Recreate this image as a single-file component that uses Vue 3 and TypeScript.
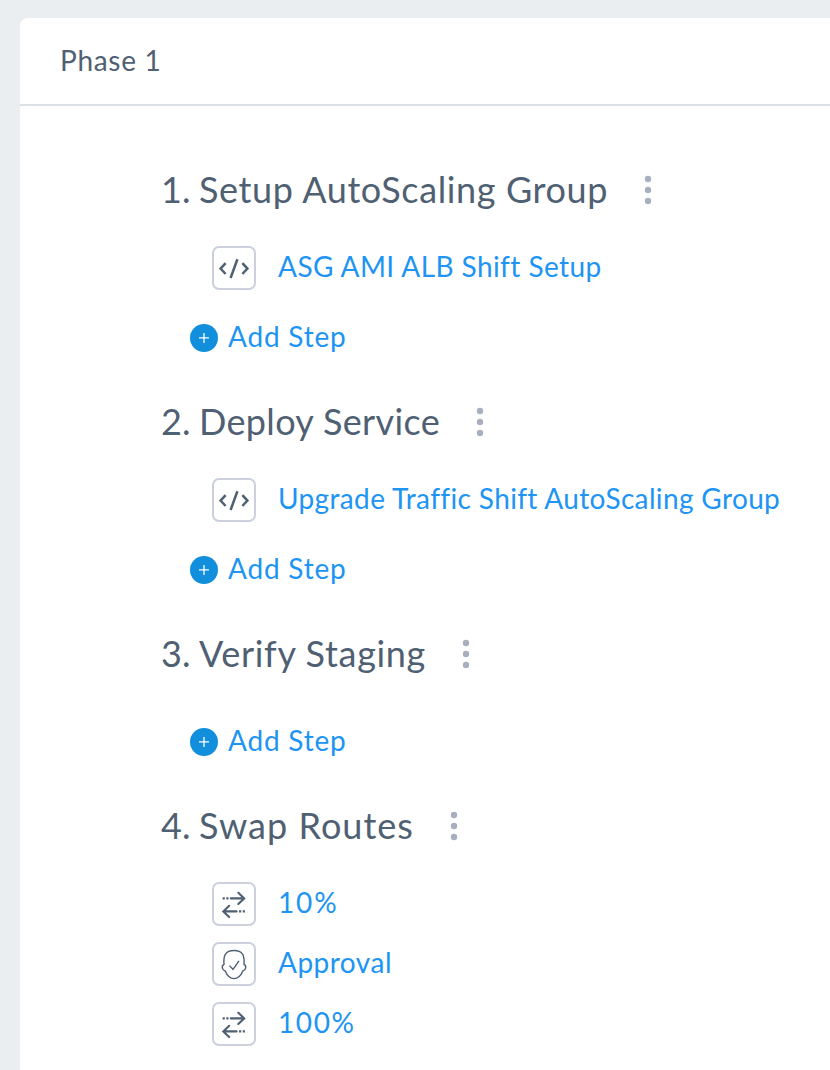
<script setup lang="ts">
type StepKind = 'code' | 'swap' | 'approval'

interface Step {
  label: string
  kind: StepKind
  width: number
}

interface Group {
  title: string
  width: number
  steps: Step[]
  canAdd: boolean
}

const groups: Group[] = [
  {
    title: 'Setup AutoScaling Group',
    width: 409,
    steps: [{ label: 'ASG AMI ALB Shift Setup', kind: 'code', width: 323 }],
    canAdd: true,
  },
  {
    title: 'Deploy Service',
    width: 241,
    steps: [{ label: 'Upgrade Traffic Shift AutoScaling Group', kind: 'code', width: 500 }],
    canAdd: true,
  },
  { title: 'Verify Staging', width: 227, steps: [], canAdd: true },
  {
    title: 'Swap Routes',
    width: 215,
    steps: [
      { label: '10%', kind: 'swap', width: 60.5 },
      { label: 'Approval', kind: 'approval', width: 114 },
      { label: '100%', kind: 'swap', width: 77.5 },
    ],
    canAdd: false,
  },
]

// Tracks a label out so that it fills the given width.
const vFit = {
  mounted(el: HTMLElement, binding: { value: number }) {
    const natural = el.getBoundingClientRect().width
    const count = (el.textContent ?? '').length
    el.style.letterSpacing = `${(binding.value - natural) / count}px`
  },
}
</script>

<template>
  <main class="page">
    <section class="card">
      <header class="card-head"><span v-fit="101.5" class="phase">Phase 1</span></header>
      <div class="card-body">
        <section v-for="(group, i) in groups" :key="group.title" class="group">
          <h2 class="group-head">
            <span class="num">{{ i + 1 }}.</span>
            <span v-fit="group.width" class="title">{{ group.title }}</span>
            <svg class="kebab" width="8" height="30" viewBox="0 0 8 30">
              <circle cx="4" cy="4" r="3.2" />
              <circle cx="4" cy="15" r="3.2" />
              <circle cx="4" cy="26" r="3.2" />
            </svg>
          </h2>
          <div class="steps">
            <div v-for="step in group.steps" :key="step.label" class="step">
              <span class="tile">
                <svg v-if="step.kind === 'code'" class="glyph code" viewBox="0 0 44 44">
                  <path d="M13.6 17.2 8.6 22.6 13.6 28M25.4 13.2 18.6 32M30.4 17.2 35.4 22.6 30.4 28" />
                </svg>
                <svg v-else-if="step.kind === 'swap'" class="glyph swap" viewBox="0 0 44 44">
                  <path d="M18.8 16.4H32M26.3 10.8 32.2 16.4 26.3 22M24.6 29.4H11.5M17.2 23.8 11.3 29.4 17.2 35" />
                  <path class="dots" d="M10.6 16.4h2.2M14.3 16.4h2.2M27 29.4h2.2M30.7 29.4h2.2" />
                </svg>
                <svg v-else class="glyph head" viewBox="0 0 44 44">
                  <path
                    d="M12 22.4C11.2 13.4 13.4 8.5 22 8.5S32.8 13.4 32 22.4C33.4 23.2 34 24.4 33.7 25.8C33.3 27.8 32.2 28.6 30.8 29C29 33.4 26 36.6 22 36.6S15 33.4 13.2 29C11.8 28.6 10.7 27.8 10.3 25.8C10 24.4 10.6 23.2 12 22.4Z"
                  />
                  <path d="M17.5 23.6 21 27.4 27 18.8" />
                </svg>
              </span>
              <a v-fit="step.width" class="link">{{ step.label }}</a>
            </div>
          </div>
          <div v-if="group.canAdd" class="add">
            <svg class="plus" width="28" height="28" viewBox="0 0 28 28">
              <circle cx="14" cy="14" r="14" />
              <path d="M9 13.9h10M14 8.9v10" />
            </svg>
            <a v-fit="118.5" class="link">Add Step</a>
          </div>
        </section>
      </div>
    </section>
  </main>
</template>

<style>
body {
  margin: 0;
  overflow: hidden;
}
</style>

<style scoped>
.page {
  box-sizing: border-box;
  height: 1070px;
  padding: 18px 0 0 20px;
  overflow: hidden;
  background: #eaeef1;
  font-family: Lato, 'Open Sans', sans-serif;
  color: #4f6072;
}
.card {
  min-height: 1052px;
  background: #fff;
  border-top-left-radius: 8px;
}
.card-head {
  box-sizing: border-box;
  display: flex;
  align-items: center;
  height: 88px;
  padding-left: 40px;
  border-bottom: 2px solid #dce1e6;
}
.phase {
  padding-bottom: 2px;
  font-size: 28px;
  line-height: 36px;
  white-space: nowrap;
}
.card-body {
  display: flex;
  flex-direction: column;
  gap: 24px;
  padding: 54px 0 0 141px;
}
.group {
  display: flex;
  flex-direction: column;
}
.group-head {
  display: flex;
  align-items: center;
  height: 60px;
  margin: 0 0 18px;
  font-size: 36px;
  font-weight: 400;
  line-height: 44px;
  white-space: nowrap;
}
.num {
  width: 38px;
  padding-bottom: 2px;
}
.title {
  padding-bottom: 2px;
}
.kebab {
  margin-left: 36px;
  fill: #a8b0c0;
}
.step {
  display: flex;
  align-items: center;
  gap: 22px;
  height: 60px;
  padding-left: 51px;
}
.tile {
  box-sizing: border-box;
  display: flex;
  width: 44px;
  height: 44px;
  border: 2px solid #cbd0dc;
  border-radius: 7px;
}
.glyph {
  flex: none;
  width: 44px;
  height: 44px;
  margin: -2px;
  fill: none;
  stroke: #4f6072;
}
.code {
  stroke-width: 2.5;
}
.swap {
  stroke-width: 2.1;
  stroke-linecap: round;
}
.dots {
  stroke-linecap: butt;
}
.head {
  stroke-width: 1.4;
}
.link {
  padding-bottom: 5px;
  font-size: 28px;
  line-height: 36px;
  color: #2094f3;
  white-space: nowrap;
}
.add {
  display: flex;
  align-items: center;
  gap: 10px;
  height: 60px;
  margin-top: 10px;
  padding-left: 29px;
}
.plus {
  fill: #128fdc;
  stroke: none;
}
.plus path {
  stroke: #fff;
  stroke-width: 1.3;
}
</style>
